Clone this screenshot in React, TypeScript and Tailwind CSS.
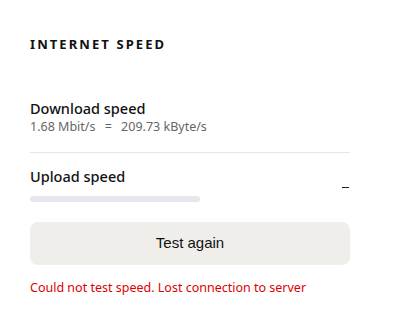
import React from "react";

export default function App() {
  return (
    <div className="w-[409px] h-[331px] bg-white" style={{ fontFamily: '"Noto Sans", "Open Sans", sans-serif' }}>
      <div className="pl-[30px] pr-[59px] pt-[36px]">
        <div className="text-[13px] font-bold tracking-[0.16em] text-[#111] leading-[16px]">INTERNET SPEED</div>
        <div className="mt-[46px]">
          <div className="text-[14.5px] font-medium text-[#111] leading-[20px]">Download speed</div>
          <div className="text-[12.5px] text-[#666] leading-[16px] mt-[1px]">
            1.68 Mbit/s <span className="mx-[6px]">=</span> 209.73 kByte/s
          </div>
        </div>
        <div className="mt-[17px] h-px bg-[#e6e6e6]" />
        <div className="mt-[13px] flex items-end justify-between">
          <div className="text-[14.5px] font-medium text-[#111] leading-[20px]">Upload speed</div>
          <div className="w-[7px] h-[1.5px] bg-[#222] mb-[-2px] mr-[1px]" />
        </div>
        <div className="mt-[10px] w-[170px] h-[6px] rounded-full bg-[#e6e7ec]" />
        <button className="mt-[20px] w-full h-[43px] rounded-[8px] bg-[#f0eeea] text-[15px] font-medium text-[#111]" style={{ fontFamily: '"Liberation Sans", Arial, sans-serif' }}>
          Test again
        </button>
        <div className="mt-[14px] text-[12.5px] text-[#d00] leading-[18px]">Could not test speed. Lost connection to server</div>
      </div>
    </div>
  );
}
